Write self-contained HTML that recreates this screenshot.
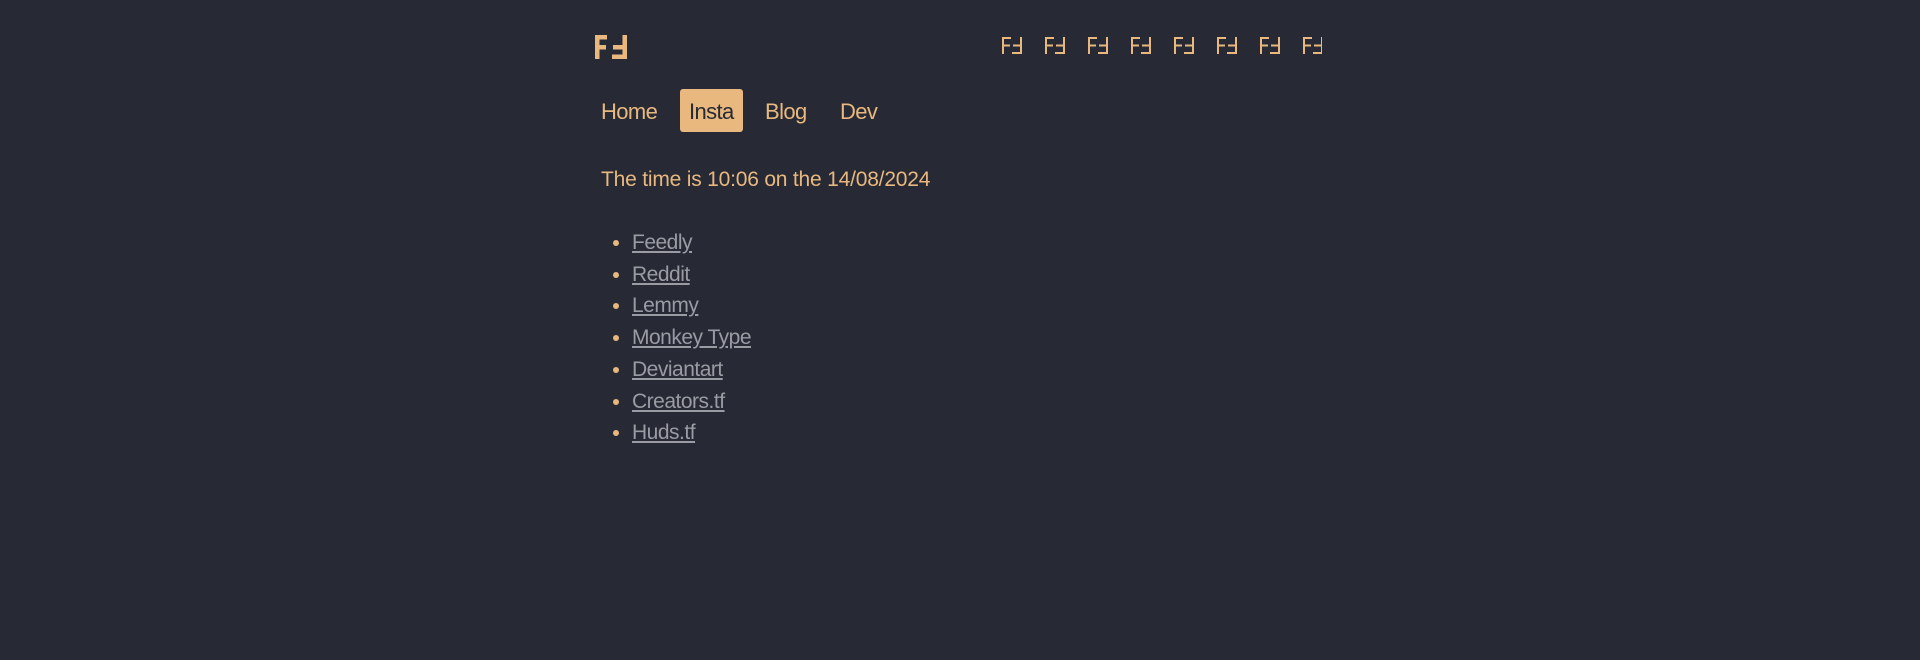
<!DOCTYPE html>
<html><head><meta charset="utf-8"><style>
html,body{margin:0;background:#272a35;width:1920px;height:660px;overflow:hidden;font-family:"Liberation Sans",sans-serif;color:#e8b87e}
.abs{position:absolute}
.nav a{position:absolute;top:89px;height:43px;line-height:46px;font-size:22px;letter-spacing:-0.6px;color:#e8b87e;text-decoration:none}
.nav a.act{background:#e8b87e;color:#272a35;border-radius:3px;padding:0 9px}
ul{position:absolute;left:598px;top:227px;margin:0;padding:0 0 0 34px;font-size:21px;letter-spacing:-0.5px;line-height:31.7px}
li::marker{color:#e8b87e}
li a{color:#9a9ba3;text-decoration:underline}
</style></head><body>
<svg class="abs" style="left:595px;top:35px" width="32" height="24" viewBox="0 0 32 24" fill="#e8b87e">
<rect x="0" y="0" width="4.5" height="24"/><rect x="0" y="0" width="12" height="4.5"/><rect x="0" y="10" width="11" height="4.5"/>
<rect x="27.5" y="0" width="4.5" height="24"/><rect x="18" y="10" width="14" height="4.5"/><rect x="17" y="19.5" width="15" height="4.5"/>
</svg>
<svg class="abs" style="left:1002px;top:37px" width="320" height="18" viewBox="0 0 320 18" fill="#e8b87e">
<defs><g id="i"><rect x="0" y="0" width="2" height="17"/><rect x="0" y="0" width="9" height="2"/><rect x="0" y="7.5" width="8" height="2"/><rect x="18" y="0" width="2" height="17"/><rect x="11" y="7.5" width="9" height="2"/><rect x="10" y="15" width="10" height="2"/></g></defs>
<use href="#i"/>
<use href="#i" x="43"/>
<use href="#i" x="86"/>
<use href="#i" x="129"/>
<use href="#i" x="172"/>
<use href="#i" x="215"/>
<use href="#i" x="258"/>
<use href="#i" x="301"/>
</svg>
<div class="nav">
<a style="left:601px">Home</a>
<a class="act" style="left:680px">Insta</a>
<a style="left:765px">Blog</a>
<a style="left:840px">Dev</a>
</div>
<div class="abs" style="left:601px;top:166px;font-size:21px;letter-spacing:-0.2px;line-height:28px">The time is 10:06 on the 14/08/2024</div>
<ul>
<li><a>Feedly</a></li>
<li><a>Reddit</a></li>
<li><a>Lemmy</a></li>
<li><a>Monkey Type</a></li>
<li><a>Deviantart</a></li>
<li><a>Creators.tf</a></li>
<li><a>Huds.tf</a></li>
</ul>
</body></html>
